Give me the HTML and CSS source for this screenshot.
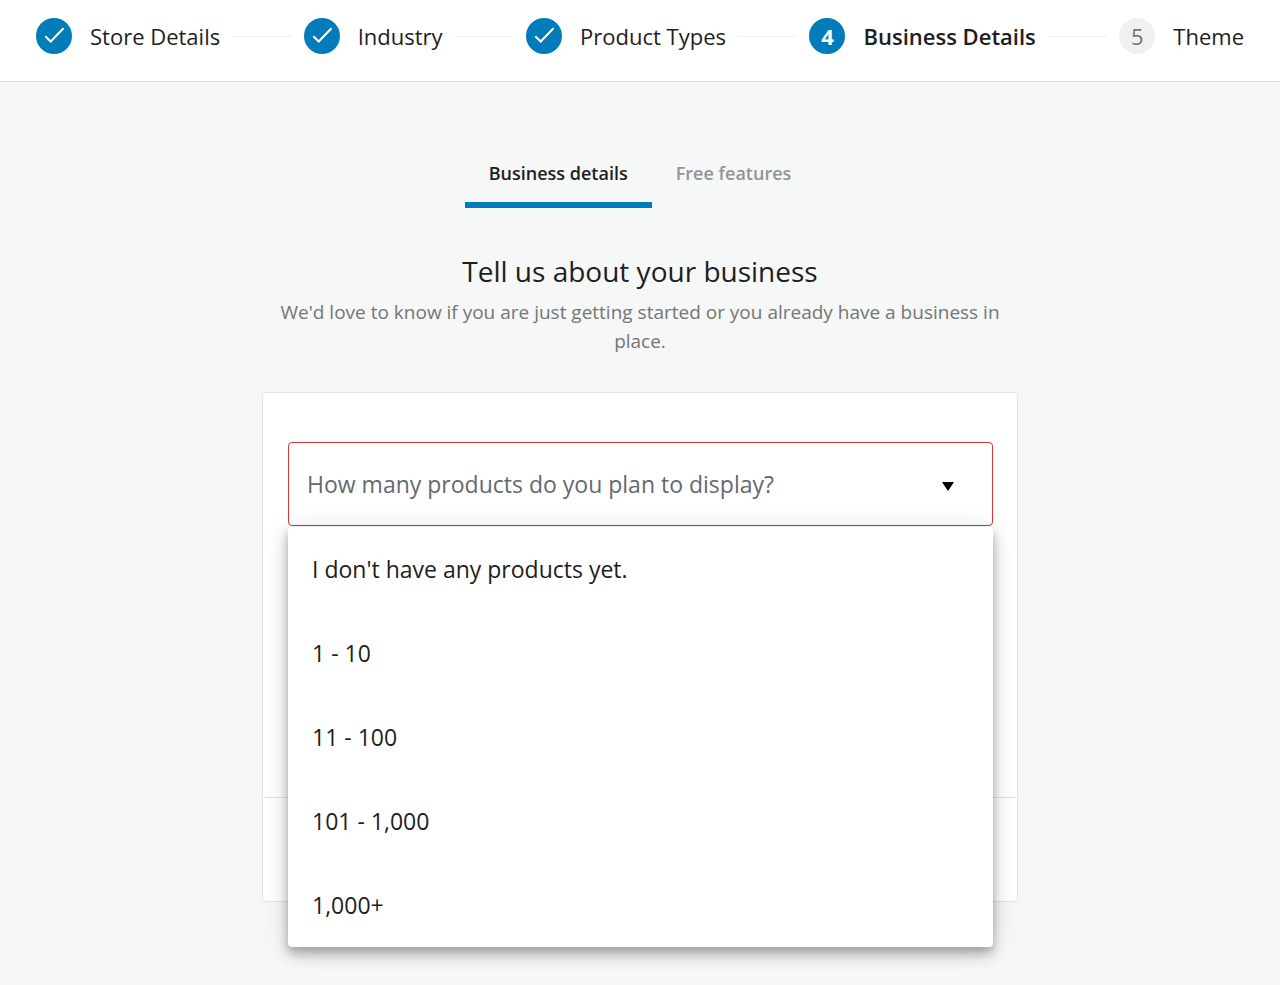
FILE: index.html
```html
<!DOCTYPE html>
<html lang="en">
<head>
    <meta charset="UTF-8">
    <meta name="viewport" content="width=device-width, initial-scale=1.0">
    <title>Store Setup - Business Details</title>
    <link rel="stylesheet" href="styles.css">
</head>
<body>
    <header class="header">
        <ol class="stepper">
            <li class="step">
                <span class="step-icon"><svg width="36" height="36" viewBox="0 0 36 36"><path d="M9.3 19.3l5.4 5.2L27.5 11.3" transform="translate(0 -1)" /></svg></span>
                <span class="step-label">Store Details</span>
            </li>
            <li class="divider" role="presentation"></li>
            <li class="step">
                <span class="step-icon"><svg width="36" height="36" viewBox="0 0 36 36"><path d="M9.3 19.3l5.4 5.2L27.5 11.3" transform="translate(0 -1)" /></svg></span>
                <span class="step-label">Industry</span>
            </li>
            <li class="divider" role="presentation"></li>
            <li class="step">
                <span class="step-icon"><svg width="36" height="36" viewBox="0 0 36 36"><path d="M9.3 19.3l5.4 5.2L27.5 11.3" transform="translate(0 -1)" /></svg></span>
                <span class="step-label">Product Types</span>
            </li>
            <li class="divider" role="presentation"></li>
            <li class="step active" aria-current="step">
                <span class="step-icon">4</span>
                <span class="step-label">Business Details</span>
            </li>
            <li class="divider" role="presentation"></li>
            <li class="step pending">
                <span class="step-icon">5</span>
                <span class="step-label">Theme</span>
            </li>
        </ol>
    </header>

    <main class="container">
        <div class="tabs" role="tablist">
            <button class="tab active" type="button" role="tab" aria-selected="true">Business details</button>
            <button class="tab" type="button" role="tab" aria-selected="false" disabled>Free features</button>
        </div>

        <div class="intro">
            <h1>Tell us about your business</h1>
            <p>We'd love to know if you are just getting started or you already have a business in place.</p>
        </div>

        <div class="card">
            <div class="card-body">
                <div class="select-control">
                    <select class="select-input" id="product-count" aria-label="How many products do you plan to display?">
                        <option value="">How many products do you plan to display?</option>
                        <option value="0">I don't have any products yet.</option>
                        <option value="1-10">1 - 10</option>
                        <option value="11-100">11 - 100</option>
                        <option value="101-1000">101 - 1,000</option>
                        <option value="1000+">1,000+</option>
                    </select>
                    <svg class="arrow" width="12" height="9" viewBox="0 0 12 9"><path d="M0 0h12L6 9z" /></svg>
                    <div class="menu" id="menu" role="listbox" aria-label="Product count">
                        <button class="option" type="button" role="option" data-value="0">I don't have any products yet.</button>
                        <button class="option" type="button" role="option" data-value="1-10">1 - 10</button>
                        <button class="option" type="button" role="option" data-value="11-100">11 - 100</button>
                        <button class="option" type="button" role="option" data-value="101-1000">101 - 1,000</button>
                        <button class="option" type="button" role="option" data-value="1000+">1,000+</button>
                    </div>
                </div>
            </div>
            <div class="card-footer"></div>
        </div>
    </main>

    <script src="script.js"></script>
</body>
</html>
```

FILE: styles.css
```css
* {
    box-sizing: border-box;
}
body {
    margin: 0;
    background: #f6f7f7;
    color: #1e1e1e;
    font-family: "Segoe UI", "Open Sans", "Noto Sans", sans-serif;
    font-size: 22px;
}
button,
select {
    font-family: inherit;
    font-size: inherit;
    color: inherit;
}

/* Steps */
.header {
    background: #fff;
    border-bottom: 1px solid #dcdcde;
    padding: 18px 36px 27px;
}
.stepper {
    display: flex;
    align-items: center;
    gap: 12px;
    list-style: none;
    margin: 0;
    padding: 0;
}
.step {
    display: flex;
    align-items: center;
    gap: 18px;
    line-height: 36px;
    white-space: nowrap;
}
.step-icon {
    width: 36px;
    height: 36px;
    border-radius: 50%;
    background: #007cba;
    color: #fff;
    text-align: center;
}
.step-icon svg {
    display: block;
    fill: none;
    stroke: #fff;
    stroke-width: 2;
}
.step.active {
    font-weight: 600;
}
.step.active .step-icon {
    font-weight: 700;
}
.step.pending .step-icon {
    background: #f0f0f0;
    color: #757575;
}
.divider {
    flex: 1;
    border-top: 1px solid #f0f0f0;
}

/* Tabs */
.container {
    max-width: 756px;
    margin: 0 auto;
    padding: 56px 0 83px;
}
.tabs {
    display: flex;
    justify-content: center;
}
.tab {
    background: none;
    border: none;
    border-bottom: 6px solid transparent;
    padding: 21px 24px 15px;
    font-size: 18px;
    line-height: 28px;
    font-weight: 600;
    cursor: pointer;
}
.tab.active {
    border-bottom-color: #007cba;
}
.tab:disabled {
    color: #949494;
    cursor: default;
}

.intro {
    padding: 42px 16px 36px;
    text-align: center;
}
.intro h1 {
    margin: 0 0 6px;
    font-size: 28px;
    line-height: 42px;
    font-weight: 400;
}
.intro p {
    margin: 0;
    font-size: 19px;
    line-height: 29px;
    color: #757575;
}

/* Card */
.card {
    background: #fff;
    border: 1px solid #e2e4e7;
    border-radius: 4px;
}
.card-body {
    min-height: 404px;
    padding: 49px 24px 24px 25px;
}
.card-footer {
    min-height: 104px;
    border-top: 1px solid #e0e0e0;
}

/* Dropdown */
.select-control {
    position: relative;
    font-size: 23px;
}
.select-input {
    display: block;
    width: 100%;
    height: 84px;
    padding: 0 72px 0 18px;
    background: #fff;
    border: 1px solid #d63638;
    border-radius: 4px;
    color: #646970;
    appearance: none;
    outline: none;
}
.arrow {
    position: absolute;
    top: 40px;
    right: 39px;
    pointer-events: none;
}
.menu {
    position: absolute;
    top: 100%;
    left: 0;
    right: 0;
    margin-top: 1px;
    background: #fff;
    border-radius: 4px;
    box-shadow: 0 5px 8px rgba(0, 0, 0, 0.2), 0 2px 27px rgba(0, 0, 0, 0.12), 0 9px 15px rgba(0, 0, 0, 0.14);
}
.menu.closed {
    display: none;
}
.option {
    display: block;
    width: 100%;
    min-height: 84px;
    padding: 24px;
    background: none;
    border: none;
    line-height: 36px;
    text-align: left;
    cursor: pointer;
}
.option:hover {
    color: #007cba;
}
```

FILE: script.js
```js
const select = document.getElementById("product-count");
const menu = document.getElementById("menu");

select.addEventListener("mousedown", function (e) {
    e.preventDefault();
    menu.classList.toggle("closed");
});

menu.querySelectorAll(".option").forEach(function (option) {
    option.addEventListener("click", function () {
        select.value = option.dataset.value;
        menu.classList.add("closed");
    });
});
```
